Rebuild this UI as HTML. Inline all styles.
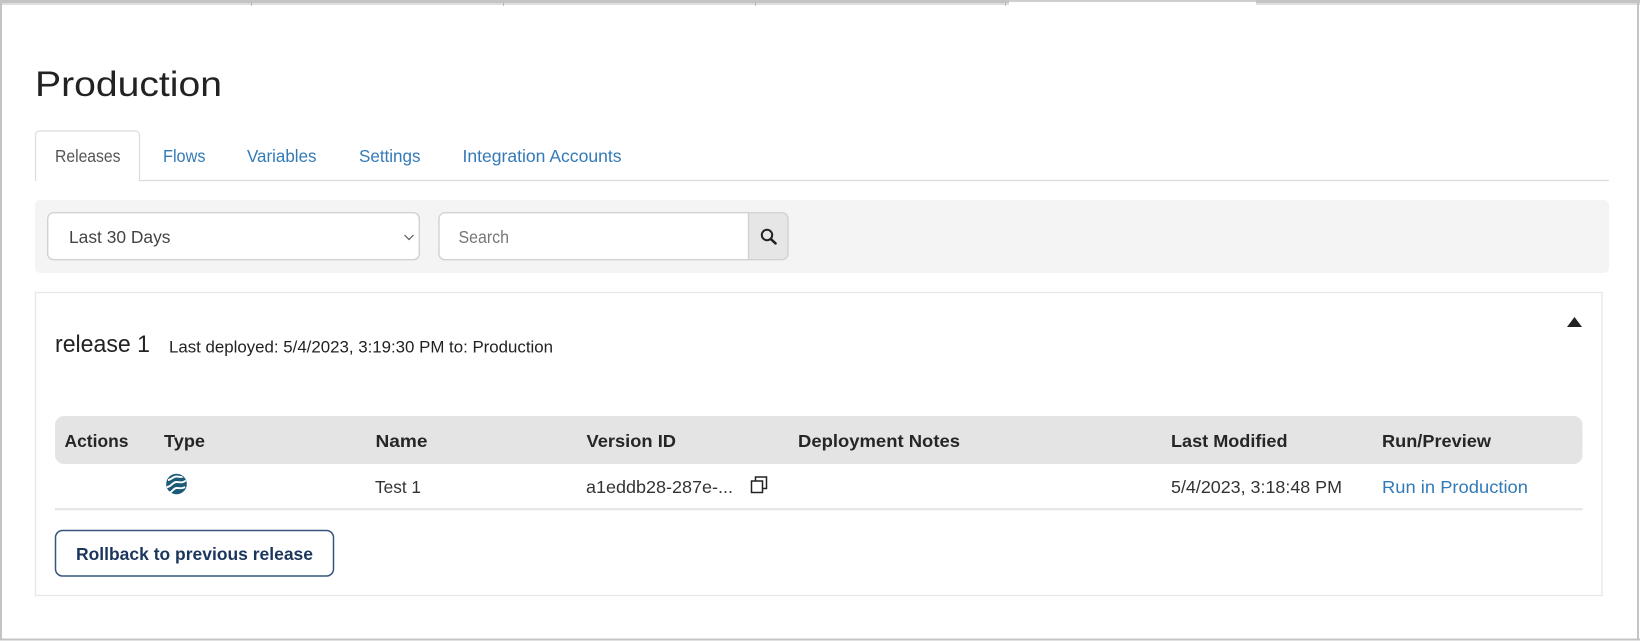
<!DOCTYPE html>
<html lang="en"><head><meta charset="utf-8"><title>Production</title>
<style>
html,body{margin:0;padding:0;background:#fff;width:1640px;height:642px;overflow:hidden}
svg{display:block;filter:blur(.3px)}
text{font-family:"Liberation Sans",Arial,sans-serif;font-size:17.5px;fill:#333}
.tab{fill:#337ab7}
.b{font-weight:700;fill:#262626}
</style></head><body>
<svg width="1640" height="642" viewBox="0 0 1640 642" xmlns="http://www.w3.org/2000/svg">
<defs><clipPath id="c"><circle cx="176.5" cy="484" r="10.300"/></clipPath></defs>
<rect width="1640" height="642" fill="#fff"/>
<!-- top strip -->
<rect x="0" y="0" width="1009" height="3" fill="#c4c4c4"/><rect x="0" y="3" width="1009" height="2" fill="#dedede"/>
<rect x="1256" y="0" width="384" height="3" fill="#c4c4c4"/><rect x="1256" y="3" width="384" height="2" fill="#dedede"/>
<rect x="1009" y="0" width="247" height="2" fill="#cfcfcf"/>
<rect x="251" y="2" width="1" height="4" fill="#bbb"/><rect x="503" y="2" width="1" height="4" fill="#bbb"/><rect x="755" y="2" width="1" height="4" fill="#bbb"/><rect x="1005" y="2" width="1" height="4" fill="#bbb"/>
<!-- frame -->
<rect x="0" y="0" width="2" height="640" fill="#c4c4c4"/>
<rect x="1637" y="0" width="2" height="640" fill="#c4c4c4"/>
<rect x="0" y="638.5" width="1640" height="2" fill="#c4c4c4"/>
<!-- heading -->
<text x="35" y="96" style="font-size:35.5px;fill:#222" textLength="187" lengthAdjust="spacingAndGlyphs">Production</text>
<!-- tabs -->
<path d="M35.500 180.500H1609" stroke="#dcdcdc" stroke-width="1.300" fill="none"/>
<path d="M35.500 181V135a4 4 0 0 1 4-4h96a4 4 0 0 1 4 4v46" fill="#fff" stroke="#dcdcdc" stroke-width="1.200"/>
<rect x="36.500" y="178" width="102" height="4" fill="#fff"/>
<text x="55" y="162" style="fill:#555" textLength="65.500" lengthAdjust="spacingAndGlyphs">Releases</text>
<text class="tab" x="163" y="162" textLength="42.500" lengthAdjust="spacingAndGlyphs">Flows</text>
<text class="tab" x="247" y="162" textLength="69.500" lengthAdjust="spacingAndGlyphs">Variables</text>
<text class="tab" x="359" y="162" textLength="61.500" lengthAdjust="spacingAndGlyphs">Settings</text>
<text class="tab" x="462.500" y="162" textLength="159" lengthAdjust="spacingAndGlyphs">Integration Accounts</text>
<!-- filter bar -->
<rect x="35" y="200" width="1574" height="73" rx="5" fill="#f4f4f4"/>
<rect x="47.700" y="212.700" width="371.600" height="47" rx="6" fill="#fff" stroke="#d2d2d2" stroke-width="1.400"/>
<text x="69" y="243" style="fill:#444" textLength="101.500" lengthAdjust="spacingAndGlyphs">Last 30 Days</text>
<path d="M404.500 235l4.500 4.500 4.500-4.500" fill="none" stroke="#555" stroke-width="1.200"/>
<path d="M748.500 212.700H782a6 6 0 0 1 6 6v35a6 6 0 0 1-6 6h-33.500z" fill="#e6e6e6" stroke="#d2d2d2" stroke-width="1.400"/>
<path d="M748.500 212.700H445a6 6 0 0 0-6 6v35a6 6 0 0 0 6 6h303.500z" fill="#fff" stroke="#d2d2d2" stroke-width="1.400"/>
<text x="458.500" y="243" style="fill:#777" textLength="50.500" lengthAdjust="spacingAndGlyphs">Search</text>
<circle cx="767" cy="235" r="5.200" fill="none" stroke="#222" stroke-width="2"/>
<path d="M771 239.200l4.600 4.200" stroke="#222" stroke-width="2.500" stroke-linecap="round"/>
<!-- card -->
<rect x="35.500" y="292.500" width="1566.500" height="303" fill="#fff" stroke="#e6e6e6" stroke-width="1.200"/>
<path d="M1567 327l7.500-10 7.500 10z" fill="#222"/>
<text x="55" y="352" style="font-size:24px;fill:#222" textLength="95" lengthAdjust="spacingAndGlyphs">release 1</text>
<text x="169" y="352.500" style="font-size:17px;fill:#222" textLength="384" lengthAdjust="spacingAndGlyphs">Last deployed: 5/4/2023, 3:19:30 PM to: Production</text>
<!-- table -->
<rect x="55" y="416" width="1527.500" height="48" rx="9" fill="#e4e4e4"/>
<text class="b" x="64.500" y="447" textLength="64" lengthAdjust="spacingAndGlyphs">Actions</text>
<text class="b" x="164" y="447" textLength="41" lengthAdjust="spacingAndGlyphs">Type</text>
<text class="b" x="375.500" y="447" textLength="52" lengthAdjust="spacingAndGlyphs">Name</text>
<text class="b" x="586.500" y="447" textLength="89.500" lengthAdjust="spacingAndGlyphs">Version ID</text>
<text class="b" x="798" y="447" textLength="162" lengthAdjust="spacingAndGlyphs">Deployment Notes</text>
<text class="b" x="1171" y="447" textLength="116.500" lengthAdjust="spacingAndGlyphs">Last Modified</text>
<text class="b" x="1382" y="447" textLength="109" lengthAdjust="spacingAndGlyphs">Run/Preview</text>
<!-- type icon -->
<circle cx="176.500" cy="484" r="10.300" fill="#1c5a78"/>
<g clip-path="url(#c)" fill="none" stroke="#fff" stroke-width="1.900" transform="translate(0 1)">
<path d="M168 479c3 0 5-3.500 8.500-3.500s4 1.500 7.500-.5"/>
<path d="M167 486c4 0 5.500-5 9.500-5s5 1.500 9.500-1.500"/>
<path d="M169 491.500c3.500 0 4-4.500 8-4.500s4.500 1 8-1"/>
</g>
<!-- row -->
<text x="375" y="493" style="fill:#333" textLength="46" lengthAdjust="spacingAndGlyphs">Test 1</text>
<text x="586" y="493" style="fill:#333" textLength="147" lengthAdjust="spacingAndGlyphs">a1eddb28-287e-...</text>
<rect x="751.500" y="481" width="11" height="11.500" fill="#fff" stroke="#222" stroke-width="1.500"/>
<path d="M755.500 481v-4h11v11.500h-4" fill="none" stroke="#222" stroke-width="1.500"/>
<text x="1171" y="493" style="fill:#333" textLength="171" lengthAdjust="spacingAndGlyphs">5/4/2023, 3:18:48 PM</text>
<text class="tab" x="1382" y="493" textLength="146" lengthAdjust="spacingAndGlyphs">Run in Production</text>
<rect x="55" y="508" width="1527.500" height="2.400" fill="#e6e6e6"/>
<!-- button -->
<rect x="55.500" y="530.500" width="278" height="45.500" rx="7" fill="#fff" stroke="#36557e" stroke-width="1.500"/>
<text x="76" y="560" style="font-weight:700;fill:#1b365d" textLength="237" lengthAdjust="spacingAndGlyphs">Rollback to previous release</text>
</svg>
</body></html>
